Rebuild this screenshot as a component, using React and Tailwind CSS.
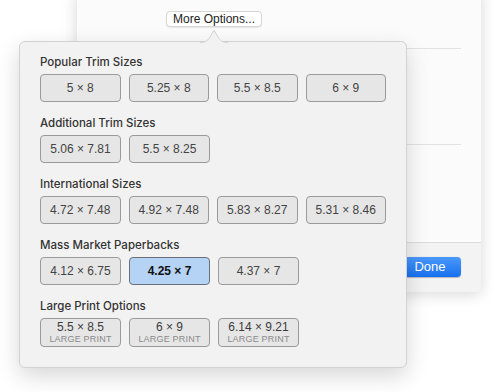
import React from 'react'

const SECTIONS = [
  { title: 'Popular Trim Sizes', sizes: ['5 × 8', '5.25 × 8', '5.5 × 8.5', '6 × 9'] },
  { title: 'Additional Trim Sizes', sizes: ['5.06 × 7.81', '5.5 × 8.25'] },
  { title: 'International Sizes', sizes: ['4.72 × 7.48', '4.92 × 7.48', '5.83 × 8.27', '5.31 × 8.46'] },
  { title: 'Mass Market Paperbacks', sizes: ['4.12 × 6.75', '4.25 × 7', '4.37 × 7'] },
  { title: 'Large Print Options', sizes: ['5.5 × 8.5', '6 × 9', '6.14 × 9.21'], large: true },
]

const SELECTED = '4.25 × 7'

function SizeButton({ label, large }) {
  const selected = label === SELECTED
  if (large) {
    return (
      <button className="flex h-[29px] w-[81px] flex-col items-center justify-center rounded-[4px] border border-[#9a9a9a] bg-[#e6e6e6] pt-[1px]">
        <span className="text-[12px] leading-[13px] text-[#3c3c3c]">{label}</span>
        <span className="text-[9px] leading-[11px] tracking-[0.2px] text-[#8a8a8a]">LARGE PRINT</span>
      </button>
    )
  }
  return (
    <button
      className={
        selected
          ? 'flex h-[28px] w-[81px] items-center justify-center rounded-[4px] border border-[#6b6f78] bg-[#b5d3f5] text-[12px] font-bold text-[#111]'
          : 'flex h-[28px] w-[81px] items-center justify-center rounded-[4px] border border-[#9a9a9a] bg-[#e6e6e6] text-[12px] text-[#444]'
      }
    >
      {label}
    </button>
  )
}

export default function App() {
  return (
    <div className="relative h-[392px] w-[500px] overflow-hidden bg-white font-['Liberation_Sans',Arial,sans-serif]">
      {/* Background window */}
      <div className="absolute left-[77px] top-[-10px] flex h-[302px] w-[404px] flex-col bg-[#fbfbfb] shadow-[0_2px_14px_rgba(0,0,0,0.16)]">
        <div className="relative flex-1 px-[20px]">
          <button className="absolute left-[89px] top-[21px] h-[16px] rounded-[4px] border border-[#d6d6d6] bg-white px-[6px] text-[12px] leading-[14px] text-[#222] shadow-[0_1px_1px_rgba(0,0,0,0.08)]">
            More Options...
          </button>
          <div className="mt-[58px] h-px bg-[#e2e2e2]" />
          <div className="mt-[95px] h-px bg-[#e2e2e2]" />
        </div>
        <div className="flex h-[50px] items-start justify-end border-t border-[#dcdcdc] bg-[#f3f3f3] px-[20px] pt-[14px]">
          <button className="h-[20px] w-[62px] rounded-[4px] bg-gradient-to-b from-[#4a98fa] to-[#1470f0] text-[13px] leading-[20px] text-white shadow-[0_0.5px_1px_rgba(0,0,0,0.25)]">
            Done
          </button>
        </div>
      </div>

      {/* Popover */}
      <div className="absolute left-[19px] top-[41px] w-[388px] rounded-[6px] border border-[#d2d2d2] bg-[#f2f2f2] px-[20px] pb-[20px] pt-[12px] shadow-[0_8px_22px_rgba(0,0,0,0.16)]">
        <svg className="absolute left-[180px] top-[-13px]" width="28" height="14" viewBox="0 0 28 14">
          <path d="M0 13.5 C5 13.5 7 12 9 9.5 L14 1.5 L19 9.5 C21 12 23 13.5 28 13.5 L28 14 L0 14 Z" fill="#f2f2f2" />
          <path d="M0 13.5 C5 13.5 7 12 9 9.5 L14 1.5 L19 9.5 C21 12 23 13.5 28 13.5" fill="none" stroke="#d2d2d2" strokeWidth="1" />
        </svg>
        <div className="flex flex-col gap-[13px]">
          {SECTIONS.map((s) => (
            <div key={s.title} className="flex flex-col gap-[4px]">
              <p className="h-[16px] font-['Inter',sans-serif] text-[11.5px] font-medium leading-[16px] text-[#333]">{s.title}</p>
              <div className="flex gap-[8px]">
                {s.sizes.map((sz) => (
                  <SizeButton key={sz} label={sz} large={s.large} />
                ))}
              </div>
            </div>
          ))}
        </div>
      </div>
    </div>
  )
}
